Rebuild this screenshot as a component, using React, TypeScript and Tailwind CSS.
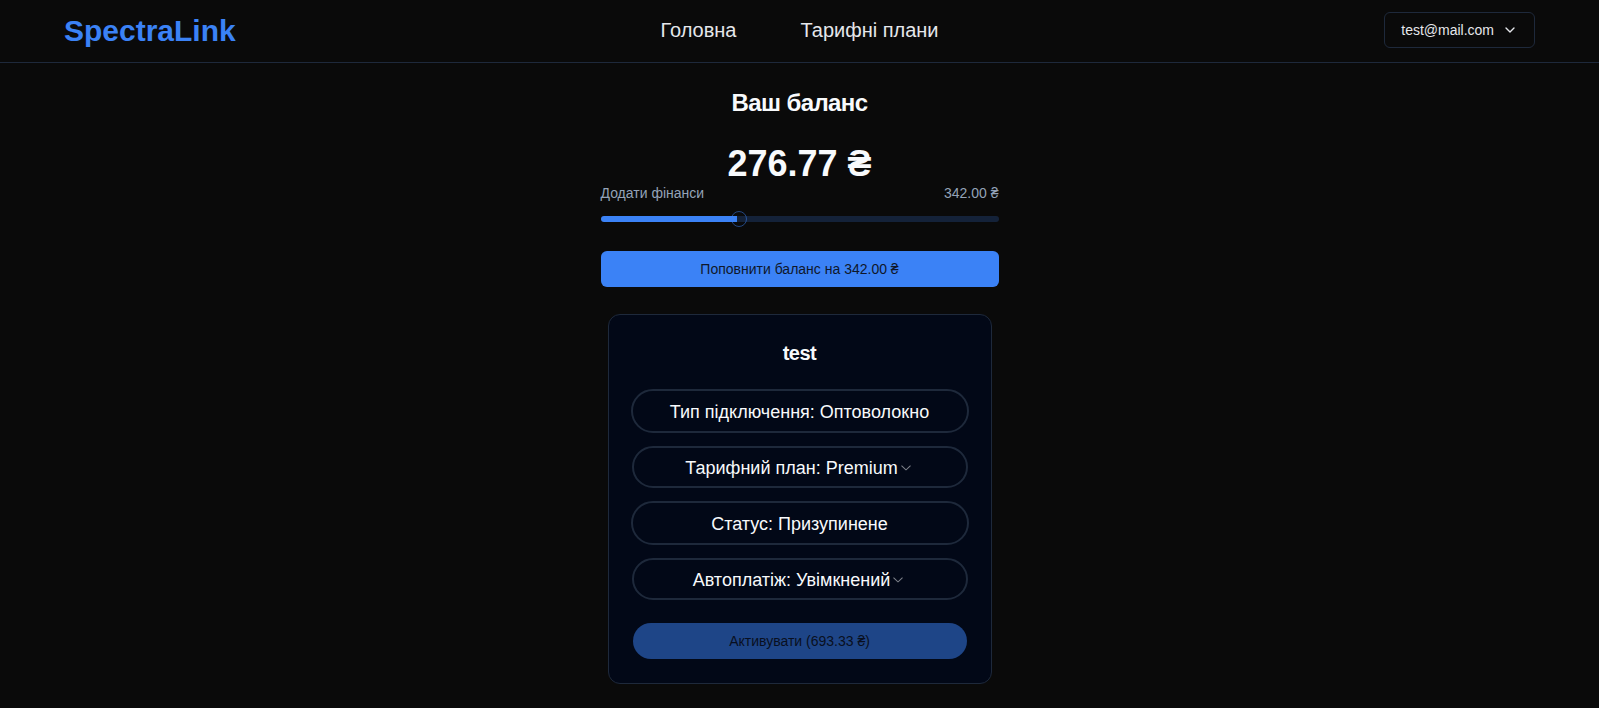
import { useState } from "react";
import { ChevronDown } from "lucide-react";

const PILL = "flex items-center justify-center rounded-full text-lg text-[#f8fafc]";
const STATIC_PILL = "-m-0.5 h-11 border-2 border-[#1e293b] pt-0.5";
const SELECT_PILL = "-m-px h-[42px] border-2 border-[#1e293b]";

function ThinChevron() {
  return (
    <svg viewBox="0 0 15 15" fill="currentColor" className="pointer-events-none size-4 opacity-50" aria-hidden="true">
      <path
        fillRule="evenodd"
        clipRule="evenodd"
        d="M3.13523 6.15803C3.3241 5.95657 3.64052 5.94637 3.84197 6.13523L7.5 9.56464L11.158 6.13523C11.3595 5.94637 11.6759 5.95657 11.8648 6.15803C12.0536 6.35949 12.0434 6.67591 11.842 6.86477L7.84197 10.6148C7.64964 10.7951 7.35036 10.7951 7.15803 10.6148L3.15803 6.86477C2.95657 6.67591 2.94637 6.35949 3.13523 6.15803Z"
      />
    </svg>
  );
}

function SelectPill({ id, label, options }: { id: string; label: string; options: string[] }) {
  return (
    <div className={`${PILL} ${SELECT_PILL}`}>
      <label htmlFor={id} className="pt-0.5 whitespace-pre">{label}: </label>
      <select
        id={id}
        className="cursor-pointer appearance-none bg-[#020817] pt-0.5 outline-none [field-sizing:content]"
      >
        {options.map((option) => (
          <option key={option}>{option}</option>
        ))}
      </select>
      <ThinChevron />
    </div>
  );
}

function Header() {
  return (
    <header className="grid grid-cols-[1fr_auto_1fr] items-center border-b border-[#1e293b] px-[4%] pt-3 pb-3">
      <a href="#home" className="justify-self-start text-3xl leading-[38px] font-bold text-[#3b82f6]">
        SpectraLink
      </a>
      <nav className="flex gap-16 self-start pt-1 text-xl text-[#e5e7eb]">
        <a href="#home">Головна</a>
        <a href="#plans">Тарифні плани</a>
      </nav>
      <button
        type="button"
        className="flex h-9 items-center gap-2 self-start justify-self-end rounded-md border border-[#1e293b] px-4 text-sm text-[#e5e7eb]"
      >
        test@mail.com
        <ChevronDown className="size-4" />
      </button>
    </header>
  );
}

function Balance() {
  const [amount, setAmount] = useState(342);
  const max = 1000;
  const percent = (amount / max) * 100;

  return (
    <section className="flex w-full max-w-[398px] flex-col">
      <h1 className="text-center text-2xl font-semibold tracking-tight">Ваш баланс</h1>
      <p className="mt-[26px] text-center text-4xl leading-[38px] font-extrabold">276.77 ₴</p>
      <div className="flex justify-between text-sm text-[#94a3b8]">
        <label htmlFor="amount">Додати фінанси</label>
        <span>{amount.toFixed(2)} ₴</span>
      </div>
      <div className="mt-2 flex">
        <input
          id="amount"
          type="range"
          min={0}
          max={max}
          value={amount}
          onChange={(event) => setAmount(Number(event.target.value))}
          style={{
            backgroundImage: `linear-gradient(to right, #3b82f6 ${percent}%, #142239 ${percent}%)`,
          }}
          className="my-[5px] h-[6px] w-full cursor-pointer appearance-none rounded-full [&::-webkit-slider-thumb]:size-4 [&::-webkit-slider-thumb]:appearance-none [&::-webkit-slider-thumb]:rounded-full [&::-webkit-slider-thumb]:border [&::-webkit-slider-thumb]:border-[#3b82f6]/50"
        />
      </div>
      <button type="button" className="mt-6 h-9 rounded-md bg-[#3b82f6] text-sm text-[#0f172a]">
        Поповнити баланс на {amount.toFixed(2)} ₴
      </button>
    </section>
  );
}

function Connection() {
  return (
    <section className="mt-[27px] flex w-full max-w-96 flex-col gap-6 rounded-xl border border-[#1e293b] bg-[#020817] p-6">
      <h2 className="text-center text-xl font-semibold tracking-tight">test</h2>
      <div className="flex flex-col gap-4">
        <p className={`${PILL} ${STATIC_PILL}`}>Тип підключення: Оптоволокно</p>
        <SelectPill id="plan" label="Тарифний план" options={["Premium"]} />
        <p className={`${PILL} ${STATIC_PILL}`}>Статус: Призупинене</p>
        <SelectPill id="autopay" label="Автоплатіж" options={["Увімкнений"]} />
      </div>
      <button type="button" disabled className="h-9 rounded-full bg-[#3b82f6] text-sm text-[#0f172a] opacity-50">
        Активувати (693.33 ₴)
      </button>
    </section>
  );
}

export default function App() {
  return (
    <div className="min-h-screen bg-[#0a0a0a] font-['Liberation_Sans',Arial,sans-serif] text-[#f8fafc]">
      <Header />
      <main className="flex flex-col items-center px-4 py-6">
        <Balance />
        <Connection />
      </main>
    </div>
  );
}
